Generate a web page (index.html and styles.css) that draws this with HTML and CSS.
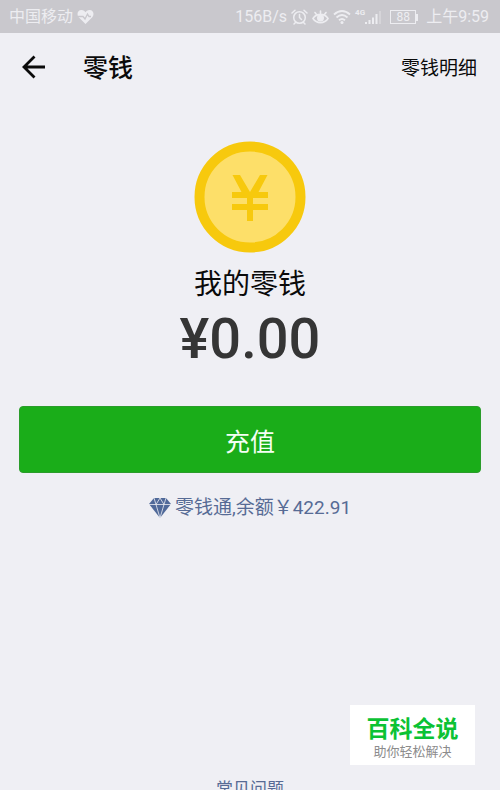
FILE: index.html
```
<!DOCTYPE html>
<html lang="zh-CN">
<head>
<meta charset="utf-8">
<meta name="viewport" content="width=device-width, initial-scale=1">
<title>零钱</title>
<link rel="stylesheet" href="styles.css">
</head>
<body>
<div class="status">
  <span>中国移动</span>
  <svg class="heart" width="17" height="16" viewBox="0 0 17 16"><path fill="currentColor" d="M8.500 15 1.500 8C-.5 5.500.5 1 4.500 1c2 0 3.300 1 4 2.300C9.200 2 10.500 1 12.500 1c4 0 5 4.500 3 7z"/><path d="M1 7.500h5l2 2.500 2.500-5 1.500 2.500h2" fill="none" stroke="#c9c8cd" stroke-width="1.300"/></svg>
  <div class="status-right">
    <span>156B/s</span>
    <svg width="17" height="16" viewBox="0 0 17 16" fill="none" stroke="currentColor" stroke-width="1.500" stroke-linecap="round"><circle cx="8.500" cy="8.500" r="5.800"/><path d="M1 4 4 1.200M16 4l-3-2.800M8.500 5.500v3l2 2M4.500 13.500 3 15M12.500 13.500 14 15"/></svg>
    <svg class="eye" width="17" height="16" viewBox="0 0 17 16" fill="none" stroke="currentColor" stroke-width="1.600" stroke-linecap="round"><path d="M1 9.500C4.500 4 12.500 4 16 9.500 12.500 15 4.500 15 1 9.500zM8.500 4.500V2M4.500 5.500 3 3.500M12.500 5.500 14 3.500"/><circle cx="8.500" cy="9" r="2.700" fill="currentColor"/></svg>
    <svg class="wifi" width="18" height="16" viewBox="0 0 18 16" fill="none" stroke="currentColor" stroke-width="1.800"><path d="M1 5.500q8-7 16 0M3.500 8.500q5.500-5 11 0M6 11.300q3-2.600 6 0"/><circle cx="9" cy="13.500" r="1.500" fill="currentColor" stroke="none"/></svg>
    <span class="net">4G</span>
    <svg width="17" height="16" viewBox="0 0 17 16" fill="currentColor"><path d="M0 13h2v2H0zM3.500 11h2v4h-2zM7 8.500h2V15H7zM10.500 5h2v10h-2z"/><path opacity=".35" d="M14 2h2v13h-2z"/></svg>
    <span class="battery"><span class="cell">88</span></span>
    <span>上午9:59</span>
  </div>
</div>
<header class="bar">
  <button class="back" type="button" aria-label="返回"><svg width="24" height="24" viewBox="0 0 24 24" fill="none" stroke="#0a0a0a" stroke-width="2.800"><path d="M23 12H3M12.500 1.500 2 12l10.500 10.500"/></svg></button>
  <h1 class="title">零钱</h1>
  <a class="detail" href="#detail">零钱明细</a>
</header>
<main class="wallet">
  <svg class="coin" width="112" height="112" viewBox="0 0 112 112"><circle cx="56" cy="56" r="50.500" fill="#fddf69" stroke="#f7c90d" stroke-width="10"/><path fill="#f7c90d" d="M38.500 34h7.500l10 17 10-17h7.500l-9 17H74v6H59v6h15v6H59v11h-6V69H38v-6h15v-6H38v-6h9.500z"/></svg>
  <p class="label">我的零钱</p>
  <p class="amount">¥0.00</p>
  <button class="topup" type="button">充值</button>
  <a class="fund" href="#fund">
    <svg width="22" height="20" viewBox="0 0 22 20"><path fill="#506999" d="M5 0h12l5 6-11 14L0 6z"/><path d="M0 6.500h22M5 0l2 6.500L11 0l4 6.500L17 0M7 6.500 11 20l4-13.500" fill="none" stroke="#efeff4" stroke-width=".8"/></svg>
    <span>零钱通,余额￥422.91</span>
  </a>
  <a class="faq" href="#faq">常见问题</a>
</main>
<aside class="brand"><strong>百科全说</strong><span>助你轻松解决</span></aside>
</body>
</html>
```
FILE: styles.css
```
* { box-sizing: border-box; }
body {
  margin: 0;
  height: 100vh;
  overflow: hidden;
  display: flex;
  flex-direction: column;
  background: #efeff4;
  color: #0a0a0a;
  font-family: Roboto, "Noto Sans CJK SC", sans-serif;
}
h1, p { margin: 0; }
a { text-decoration: none; }
button { border: 0; padding: 0; font-family: inherit; cursor: pointer; }
svg { display: block; flex: none; }

.status {
  flex: none;
  display: flex;
  align-items: center;
  height: 33px;
  padding: 1px 11px 0 9px;
  background: #c9c8cd;
  color: #ededf1;
  font-size: 16px;
  line-height: 32px;
  white-space: nowrap;
}
.heart { margin-left: 4px; }
.status-right { display: flex; align-items: center; gap: 4px; margin-left: auto; }
.net { align-self: flex-start; font-size: 8px; font-weight: 700; line-height: 24px; margin-right: -4px; }
.battery { display: flex; align-items: center; margin: 0 4px; }
.battery::after { content: ""; width: 2px; height: 7px; background: currentColor; }
.cell {
  width: 26px;
  height: 14px;
  border: 1px solid currentColor;
  font-size: 12px;
  line-height: 12px;
  text-align: center;
}

.bar { flex: none; display: flex; align-items: center; height: 68px; padding: 0 23px 0 22px; }
.back { background: none; }
.title { margin-left: 37px; padding-top: 4px; font-size: 25px; line-height: 36px; font-weight: 500; }
.detail { margin-left: auto; padding-top: 4px; color: inherit; font-size: 19px; line-height: 28px; }

.wallet { flex: none; display: flex; flex-direction: column; align-items: center; padding: 40px 19px 0; }
.label { margin-top: 12px; font-size: 28px; line-height: 40px; }
.amount { margin-top: 4px; color: #353535; font-size: 56px; line-height: 60px; font-weight: 500; }
.topup {
  width: 100%;
  height: 67px;
  margin-top: 37px;
  border: 1px solid #2b9c2b;
  border-radius: 4px;
  background: #1aad19;
  color: #f4fff4;
  font-size: 25px;
}
.fund {
  display: flex;
  align-items: center;
  gap: 4px;
  margin-top: 21px;
  color: #576b95;
  font-size: 19px;
  line-height: 28px;
}
.faq { margin-top: 255px; color: #576b95; font-size: 17px; line-height: 24px; }

.brand {
  position: absolute;
  right: 25px;
  bottom: 25px;
  display: flex;
  flex-direction: column;
  align-items: center;
  width: 125px;
  height: 60px;
  padding-top: 11px;
  background: #fff;
  color: #8c8c8c;
  font-size: 13px;
  line-height: 16px;
}
.brand strong { color: #0bc234; font-size: 23px; line-height: 28px; }
```
